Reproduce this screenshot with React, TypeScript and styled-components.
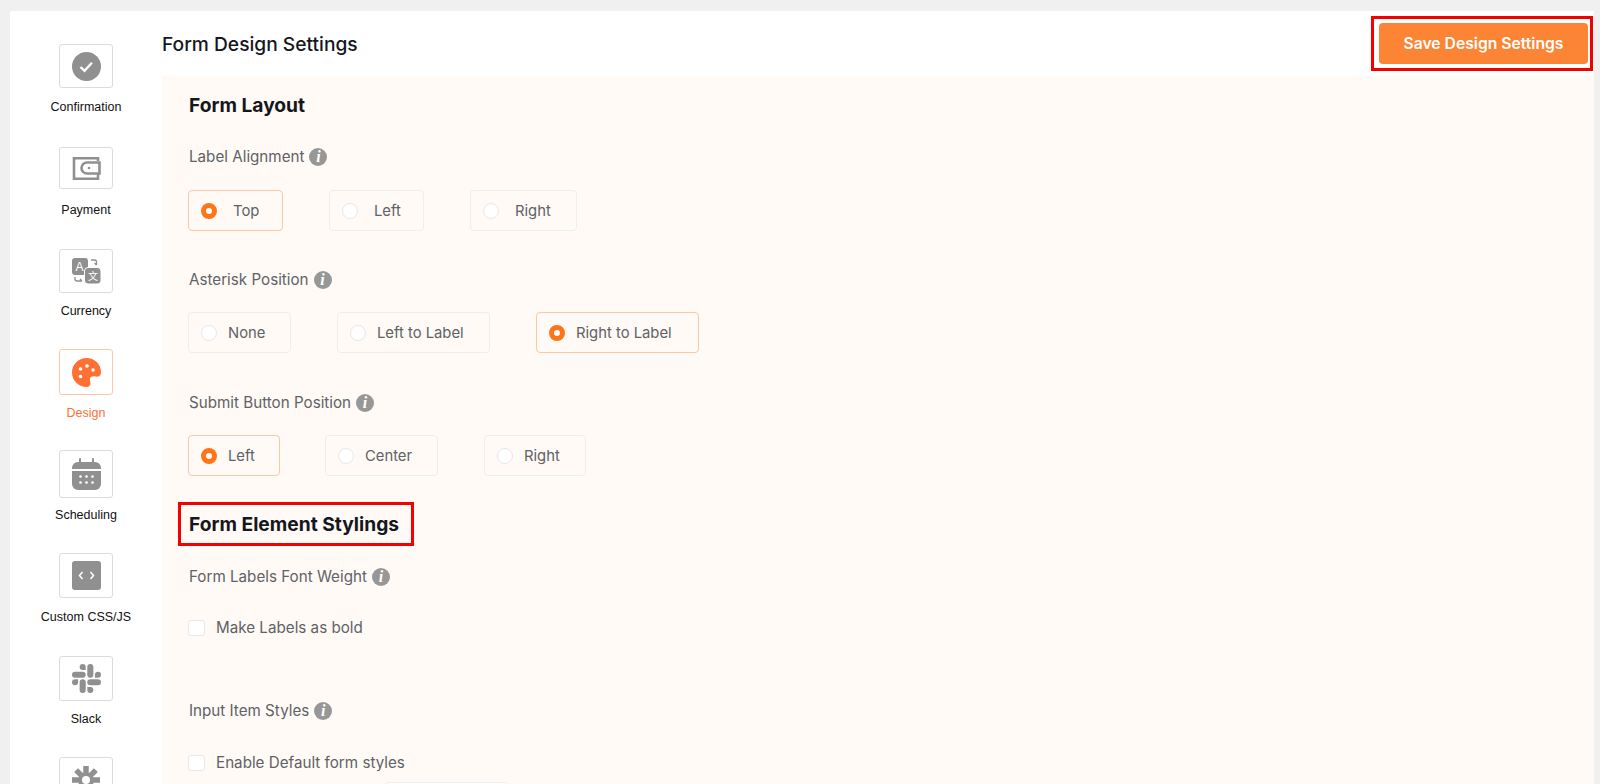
import React from "react";
import styled, { createGlobalStyle } from "styled-components";
import { SiSlack } from "react-icons/si";

const GlobalStyle = createGlobalStyle`
    html, body {
        margin: 0;
        height: 100%;
        overflow: hidden;
        background: #f0f0f0;
    }
`;

const Page = styled.div`
    display: flex;
    height: 784px;
    padding: 11px 6px 0 10px;
    box-sizing: border-box;
    font-family: Inter, "Liberation Sans", sans-serif;
`;

const Card = styled.div`
    display: flex;
    flex: 1;
    min-width: 0;
    background: #fff;
    overflow: hidden;
`;

const Sidebar = styled.nav`
    display: flex;
    flex-direction: column;
    align-items: center;
    width: 152px;
    flex-shrink: 0;
    padding: 33px 0 0 0;
    box-sizing: border-box;
`;

const SideItem = styled.div<{ $height: number }>`
    display: flex;
    flex-direction: column;
    align-items: center;
    flex-shrink: 0;
    width: 100%;
    height: ${(p) => p.$height}px;
`;

const Tile = styled.div<{ $height: number; $active?: boolean }>`
    display: flex;
    align-items: center;
    justify-content: center;
    flex-shrink: 0;
    width: 54px;
    height: ${(p) => p.$height}px;
    box-sizing: border-box;
    border: 1.5px solid ${(p) => (p.$active ? "#fdc5ab" : "#dcdcdc")};
    border-radius: 3px;
    color: ${(p) => (p.$active ? "#ff7033" : "#909090")};
`;

const SideLabel = styled.span<{ $gap: number; $active?: boolean }>`
    margin-top: ${(p) => p.$gap}px;
    font-family: "Liberation Sans", Arial, sans-serif;
    font-size: 12.5px;
    line-height: 16px;
    color: ${(p) => (p.$active ? "#ff7033" : "#111")};
`;

const Main = styled.main`
    display: flex;
    flex-direction: column;
    flex: 1;
    min-width: 0;
`;

const TopBar = styled.header`
    display: flex;
    align-items: flex-start;
    justify-content: space-between;
    height: 65px;
    flex-shrink: 0;
`;

const PageTitle = styled.h1`
    margin: 21px 0 0;
    font-size: 19.2px;
    line-height: 24px;
    font-weight: 500;
    color: #14171c;
`;

const SaveOutline = styled.div`
    display: flex;
    margin: 5px 1px 0 0;
    padding: 4px 2px 4px 5px;
    border: 3px solid #f40000;
`;

const SaveButton = styled.button`
    width: 209px;
    height: 41px;
    border: 0;
    border-radius: 4px;
    background: #fb8535;
    color: #fff;
    font-family: Inter, "Liberation Sans", sans-serif;
    font-size: 15.7px;
    font-weight: 600;
`;

const Panel = styled.section`
    display: flex;
    flex-direction: column;
    flex: 1;
    padding: 17px 0 0 27px;
    background: #fffaf6;
    overflow: hidden;
`;

const SectionTitle = styled.h2`
    margin: 0;
    font-size: 19.2px;
    line-height: 24px;
    font-weight: 700;
    color: #14171c;
`;

const TitleOutline = styled.div`
    align-self: flex-start;
    margin: 26px 0 0 -11px;
    padding: 7px 12px 7px 8px;
    border: 3px solid #f40000;
`;

const FieldLabel = styled.div<{ $top: number }>`
    display: flex;
    align-items: center;
    gap: 5px;
    margin-top: ${(p) => p.$top}px;
    font-size: 15.2px;
    line-height: 20px;
    color: #606266;
`;

const InfoIcon = styled.span`
    display: inline-flex;
    align-items: center;
    justify-content: center;
    width: 18px;
    height: 18px;
    border-radius: 50%;
    background: #979797;
    color: #fff;
    font-family: "Liberation Serif", serif;
    font-size: 16px;
    font-style: italic;
    font-weight: 700;
`;

const RadioRow = styled.div<{ $top: number }>`
    display: flex;
    margin: ${(p) => p.$top}px 0 0 -1px;
`;

const RadioBox = styled.label<{ $width: number; $gap: number; $inner: number; $active?: boolean }>`
    display: flex;
    align-items: center;
    gap: ${(p) => p.$inner}px;
    width: ${(p) => p.$width}px;
    height: 41px;
    margin-right: ${(p) => p.$gap}px;
    padding-left: 12px;
    box-sizing: border-box;
    border: 1px solid ${(p) => (p.$active ? "#fdc8a4" : "#efeeed")};
    border-radius: 4px;
    font-size: 14.8px;
    color: #606266;
`;

const RadioDot = styled.span<{ $active?: boolean }>`
    flex-shrink: 0;
    width: 16px;
    height: 16px;
    box-sizing: border-box;
    border-radius: 50%;
    background: #fff;
    border: ${(p) => (p.$active ? "5px solid #ff7417" : "1px solid #e6e8ee")};
`;

const CheckRow = styled.label<{ $top: number }>`
    display: flex;
    align-items: center;
    gap: 11px;
    margin: ${(p) => p.$top}px 0 0 -1px;
    font-size: 15.2px;
    line-height: 20px;
    color: #606266;
`;

const CheckBox = styled.span`
    flex-shrink: 0;
    width: 17px;
    height: 16px;
    box-sizing: border-box;
    border: 1px solid #e8e8ea;
    border-radius: 3px;
    background: #fff;
`;

const StyleSelect = styled.div`
    flex-shrink: 0;
    width: 124px;
    height: 40px;
    margin: 9px 0 0 196px;
    box-sizing: border-box;
    border: 1px solid #eeeeee;
    border-radius: 4px;
    background: #fff;
`;

const Wallet = () => (
    <svg width="29" height="25" viewBox="0 0 29 25" fill="none" stroke="currentColor" strokeWidth="2.6">
        <path d="M26 5V2.3H2v20.4h24V18" />
        <path d="M27.5 6.5H15a5.5 5.5 0 0 0 0 11h12.5z" />
        <circle cx="17" cy="12" r="1.3" fill="currentColor" stroke="none" />
    </svg>
);

const Check = () => (
    <svg width="29" height="29" viewBox="0 0 29 29">
        <circle cx="14.5" cy="14.5" r="14.5" fill="currentColor" />
        <path d="M8.5 15l4 3.8 7.5-8" fill="none" stroke="#fff" strokeWidth="2.4" />
    </svg>
);

const Translate = () => (
    <svg width="29" height="26" viewBox="0 0 29 26">
        <rect x="0" y="0" width="16" height="17" rx="3" fill="currentColor" />
        <rect x="12.5" y="9.5" width="16.500" height="16.500" rx="3.500" fill="currentColor" stroke="#fff" strokeWidth="1" />
        <text x="7.500" y="12.500" textAnchor="middle" fontSize="12" fill="#fff" fontFamily="Liberation Sans">A</text>
        <text x="21" y="22" textAnchor="middle" fontSize="10" fill="#fff" fontFamily="Noto Sans CJK SC">文</text>
        <path d="M19 2h3.500a2 2 0 0 1 2 2v3M24.500 7l-2-2M3 19v2a2 2 0 0 0 2 2h5M10 23l-2-2" fill="none" stroke="currentColor" strokeWidth="1.300" />
    </svg>
);

const Palette = () => (
    <svg width="29" height="29" viewBox="0 0 29 29">
        <path
            d="M14.500 0C22.500 0 29 6.300 29 14c0 4-2.400 5.200-5.500 4.600-3-.6-5.600-.2-5.600 3.200 0 1.300.6 2.200.6 3.700 0 2.300-1.600 3.500-4 3.500C6.500 29 0 22.500 0 14.500S6.500 0 14.500 0z"
            fill="currentColor"
        />
        <g fill="#fff">
            <circle cx="15" cy="8" r="1.800" />
            <circle cx="8.500" cy="11" r="1.800" />
            <circle cx="21" cy="12" r="1.800" />
            <circle cx="8.500" cy="18.500" r="1.800" />
        </g>
    </svg>
);

const Calendar = () => (
    <svg width="29" height="32" viewBox="0 0 29 32">
        <path d="M8 1v5M21 1v5" stroke="currentColor" strokeWidth="2" strokeLinecap="round" />
        <path d="M0 10a6 6 0 0 1 6-6h17a6 6 0 0 1 6 6v1H0zM0 13h29v13a6 6 0 0 1-6 6H6a6 6 0 0 1-6-6z" fill="currentColor" />
        <g fill="#fff">
            <circle cx="8.500" cy="18.500" r="1.300" />
            <circle cx="14.500" cy="18.500" r="1.300" />
            <circle cx="20.500" cy="18.500" r="1.300" />
            <circle cx="8.500" cy="24.500" r="1.300" />
            <circle cx="14.500" cy="24.500" r="1.300" />
            <circle cx="20.500" cy="24.500" r="1.300" />
        </g>
    </svg>
);

const Code = () => (
    <svg width="29" height="29" viewBox="0 0 29 29">
        <rect width="29" height="29" rx="3" fill="currentColor" />
        <path d="M10.500 11l-3 3.500 3 3.500M18.500 11l3 3.500-3 3.500" fill="none" stroke="#fff" strokeWidth="1.500" />
    </svg>
);

const Spokes = () => (
    <svg width="30" height="30" viewBox="0 0 30 30">
        <path d="M15 1v28M1 15h28M5.100 5.100l19.800 19.800M24.900 5.100L5.100 24.900" stroke="currentColor" strokeWidth="5.500" />
        <circle cx="15" cy="15" r="7.500" fill="currentColor" />
        <circle cx="15" cy="15" r="4" fill="#fff" />
    </svg>
);

const sideItems = [
    { id: "confirmation", label: "Confirmation", icon: <Check />, tile: 44, height: 103, gap: 11 },
    { id: "payment", label: "Payment", icon: <Wallet />, tile: 42, height: 102, gap: 13 },
    { id: "currency", label: "Currency", icon: <Translate />, tile: 44, height: 100, gap: 10 },
    { id: "design", label: "Design", icon: <Palette />, tile: 46, height: 101, gap: 10, active: true },
    { id: "scheduling", label: "Scheduling", icon: <Calendar />, tile: 48, height: 103, gap: 9 },
    { id: "custom", label: "Custom CSS/JS", icon: <Code />, tile: 45, height: 103, gap: 11 },
    { id: "slack", label: "Slack", icon: <SiSlack size={29} />, tile: 45, height: 101, gap: 10 },
    { id: "zapier", label: "", icon: <Spokes />, tile: 45, height: 60, gap: 0 },
];

interface RadioOption {
    label: string;
    width: number;
    gap: number;
    active?: boolean;
}

interface RadioGroupProps {
    top: number;
    inner: number;
    options: RadioOption[];
}

const RadioGroup: React.FunctionComponent<RadioGroupProps> = ({ top, inner, options }) => (
    <RadioRow $top={top}>
        {options.map((o) => (
            <RadioBox key={o.label} $width={o.width} $gap={o.gap} $inner={inner} $active={o.active}>
                <RadioDot $active={o.active} />
                {o.label}
            </RadioBox>
        ))}
    </RadioRow>
);

const Field: React.FunctionComponent<{ top: number; children: React.ReactNode }> = ({ top, children }) => (
    <FieldLabel $top={top}>
        {children}
        <InfoIcon>i</InfoIcon>
    </FieldLabel>
);

export default function App() {
    return (
        <>
            <GlobalStyle />
            <Page>
                <Card>
                    <Sidebar>
                        {sideItems.map((item) => (
                            <SideItem key={item.id} $height={item.height}>
                                <Tile $height={item.tile} $active={item.active}>
                                    {item.icon}
                                </Tile>
                                {item.label && (
                                    <SideLabel $gap={item.gap} $active={item.active}>
                                        {item.label}
                                    </SideLabel>
                                )}
                            </SideItem>
                        ))}
                    </Sidebar>
                    <Main>
                        <TopBar>
                            <PageTitle>Form Design Settings</PageTitle>
                            <SaveOutline>
                                <SaveButton>Save Design Settings</SaveButton>
                            </SaveOutline>
                        </TopBar>
                        <Panel>
                            <SectionTitle>Form Layout</SectionTitle>
                            <Field top={30}>Label Alignment</Field>
                            <RadioGroup
                                top={23}
                                inner={16}
                                options={[
                                    { label: "Top", width: 95, gap: 46, active: true },
                                    { label: "Left", width: 95, gap: 46 },
                                    { label: "Right", width: 107, gap: 0 },
                                ]}
                            />
                            <Field top={39}>Asterisk Position</Field>
                            <RadioGroup
                                top={22}
                                inner={11}
                                options={[
                                    { label: "None", width: 103, gap: 46 },
                                    { label: "Left to Label", width: 153, gap: 46 },
                                    { label: "Right to Label", width: 163, gap: 0, active: true },
                                ]}
                            />
                            <Field top={40}>Submit Button Position</Field>
                            <RadioGroup
                                top={22}
                                inner={11}
                                options={[
                                    { label: "Left", width: 92, gap: 45, active: true },
                                    { label: "Center", width: 113, gap: 46 },
                                    { label: "Right", width: 102, gap: 0 },
                                ]}
                            />
                            <TitleOutline>
                                <SectionTitle>Form Element Stylings</SectionTitle>
                            </TitleOutline>
                            <Field top={21}>Form Labels Font Weight</Field>
                            <CheckRow $top={31}>
                                <CheckBox />
                                Make Labels as bold
                            </CheckRow>
                            <Field top={63}>Input Item Styles</Field>
                            <CheckRow $top={32}>
                                <CheckBox />
                                Enable Default form styles
                            </CheckRow>
                            <StyleSelect />
                        </Panel>
                    </Main>
                </Card>
            </Page>
        </>
    );
}
